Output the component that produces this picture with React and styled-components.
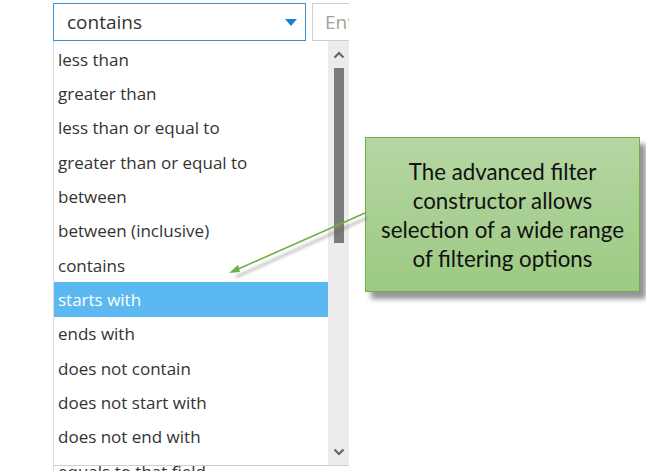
import React from "react";
import styled, { createGlobalStyle } from "styled-components";

const Global = createGlobalStyle`
  html, body { margin: 0; padding: 0; background: #fff; overflow: hidden; }
  body { font-family: "Open Sans", "Noto Sans", sans-serif; }
`;

const Page = styled.div`
  position: relative;
  width: 646px;
  height: 471px;
  overflow: hidden;
  display: flex;
  align-items: flex-start;
  padding-left: 53px;
  box-sizing: border-box;
`;

const Widget = styled.div`
  width: 296px;
  height: 471px;
  display: flex;
  flex-direction: column;
  padding-top: 3px;
  box-sizing: border-box;
  overflow: hidden;
  flex: none;
`;

const TopRow = styled.div`
  display: flex;
  gap: 6px;
  height: 38px;
  flex: none;
`;

const Select = styled.div`
  width: 253px;
  flex: none;
  box-sizing: border-box;
  border: 1px solid #3f91d4;
  display: flex;
  align-items: center;
  justify-content: space-between;
  padding: 0 8px 0 13px;
  font-size: 19px;
  color: #333;
`;

const Caret = styled.span`
  width: 0;
  height: 0;
  border-left: 6px solid transparent;
  border-right: 6px solid transparent;
  border-top: 7px solid #1f7fcf;
`;

const Input = styled.div`
  flex: none;
  width: 90px;
  box-sizing: border-box;
  border: 1px solid #cfcfcf;
  display: flex;
  align-items: center;
  padding-left: 12px;
  font-size: 19px;
  color: #a8a09a;
  white-space: nowrap;
  overflow: hidden;
`;

const ListPanel = styled.div`
  position: relative;
  flex: 1;
  display: flex;
  border-left: 1px solid #dcdcdc;
  overflow: hidden;
  &::after {
    content: "";
    position: absolute;
    left: 0;
    right: 0;
    top: 424px;
    height: 1px;
    background: #cfcfcf;
  }
`;

const Options = styled.div`
  flex: 1;
  display: flex;
  flex-direction: column;
  padding-top: 1px;
`;

const Option = styled.div`
  height: 34.33px;
  flex: none;
  display: flex;
  align-items: center;
  padding-left: 4px;
  font-size: 17px;
  color: ${(p) => (p.$active ? "#fff" : "#333")};
  background: ${(p) => (p.$active ? "#5cb8f0" : "transparent")};
  white-space: nowrap;
`;

const ScrollTrack = styled.div`
  width: 21px;
  height: 424px;
  flex: none;
  background: #ececec;
  display: flex;
  flex-direction: column;
  align-items: center;
`;

const ArrowBtn = styled.div`
  height: 27px;
  width: 21px;
  display: flex;
  align-items: center;
  justify-content: center;
  flex: none;
`;

const Thumb = styled.div`
  width: 10px;
  height: 175px;
  background: #7b7b7b;
  flex: none;
`;

const Filler = styled.div`
  flex: 1;
`;

const Callout = styled.div`
  flex: none;
  margin-left: 16px;
  margin-top: 137px;
  width: 275px;
  height: 155px;
  box-sizing: border-box;
  border: 1px solid #71ad4a;
  background: linear-gradient(to bottom, #b5d6a2, #9cca83);
  box-shadow: 6px 7px 5px rgba(0, 0, 0, 0.42);
  display: flex;
  align-items: center;
  justify-content: center;
  text-align: center;
  font-family: Lato, "Open Sans", sans-serif;
  font-size: 22.3px;
  line-height: 29px;
  color: #111;
  white-space: nowrap;
`;

const Overlay = styled.svg`
  position: absolute;
  left: 0;
  top: 0;
  pointer-events: none;
`;

const Chevron = ({ down }) => (
  <svg width="12" height="8" viewBox="0 0 12 8">
    <path
      d={down ? "M1.5 1.5 L6 6 L10.5 1.5" : "M1.5 6.5 L6 2 L10.5 6.5"}
      fill="none"
      stroke="#666"
      strokeWidth="2.2"
    />
  </svg>
);

const items = [
  "less than",
  "greater than",
  "less than or equal to",
  "greater than or equal to",
  "between",
  "between (inclusive)",
  "contains",
  "starts with",
  "ends with",
  "does not contain",
  "does not start with",
  "does not end with",
  "equals to that field",
];

export default function App() {
  return (
    <>
      <Global />
      <Page>
        <Widget>
          <TopRow>
            <Select>
              <span>contains</span>
              <Caret />
            </Select>
            <Input>Enter value</Input>
          </TopRow>
          <ListPanel>
            <Options>
              {items.map((t) => (
                <Option key={t} $active={t === "starts with"}>
                  {t}
                </Option>
              ))}
            </Options>
            <ScrollTrack>
              <ArrowBtn>
                <Chevron />
              </ArrowBtn>
              <Thumb />
              <Filler />
              <ArrowBtn>
                <Chevron down />
              </ArrowBtn>
            </ScrollTrack>
          </ListPanel>
        </Widget>
        <Callout>
          <div>
            The advanced filter
            <br />
            constructor allows
            <br />
            selection of a wide range
            <br />
            of filtering options
          </div>
        </Callout>
        <Overlay width="646" height="471" viewBox="0 0 646 471">
          <defs>
            <filter id="sh" x="-20%" y="-50%" width="140%" height="200%">
              <feGaussianBlur stdDeviation="1.5" />
            </filter>
          </defs>
          <g filter="url(#sh)" opacity="0.45">
            <line x1="367" y1="218" x2="236" y2="277" stroke="#555" strokeWidth="2" />
          </g>
          <line x1="365" y1="213" x2="236" y2="270" stroke="#6fb044" strokeWidth="1.6" />
          <path d="M229 273 L238 265 L240 272 Z" fill="#6fb044" />
        </Overlay>
      </Page>
    </>
  );
}
